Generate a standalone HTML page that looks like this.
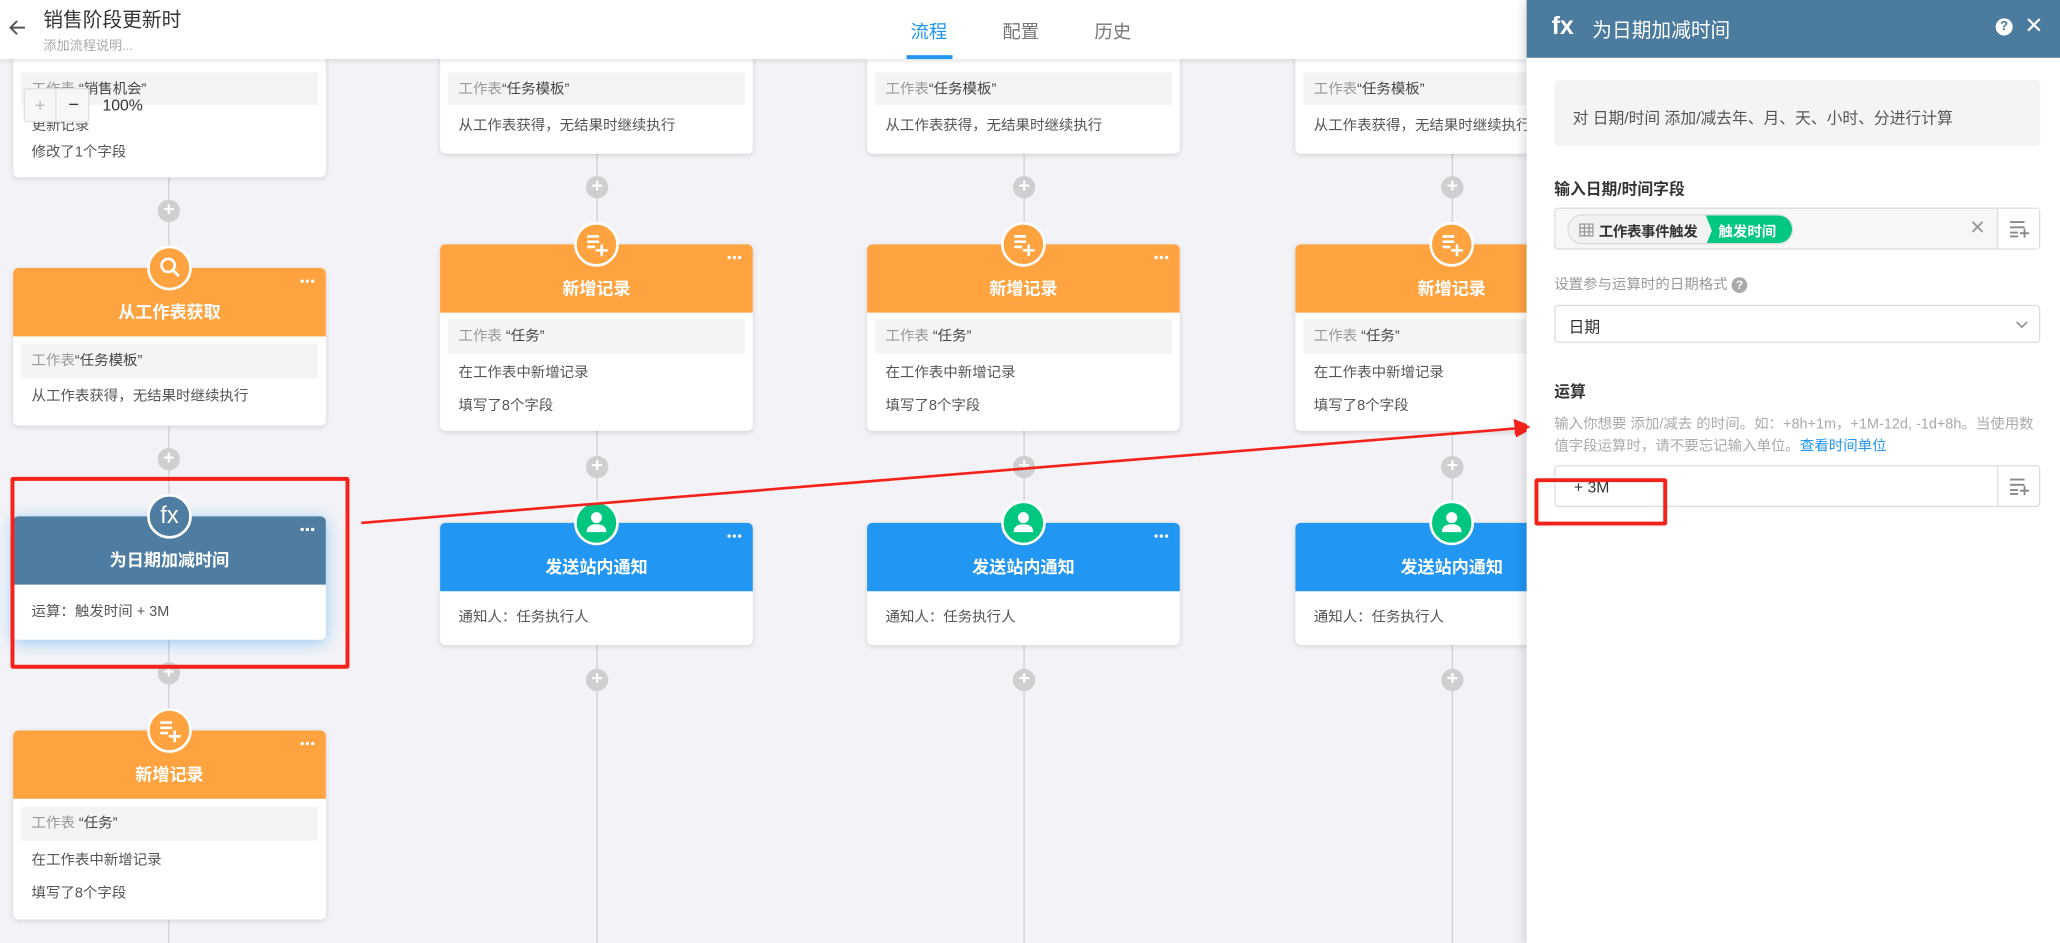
<!DOCTYPE html>
<html><head><meta charset="utf-8"><style>
*{box-sizing:border-box;margin:0;padding:0}
html,body{width:2060px;height:943px;overflow:hidden;background:#f3f3f7}
#w{position:absolute;left:0;top:0;width:1568px;height:718px;transform:scale(1.31378);transform-origin:0 0;font-family:"Liberation Sans","Noto Sans CJK SC",sans-serif;background:#f3f3f7;overflow:hidden}
.a{position:absolute}
.vl{position:absolute;width:1px;background:#d0d0d4;top:44px;height:680px}
.pl{position:absolute;width:17px;height:17px;border-radius:50%;background:#cfcfd2;color:#fff;font-size:15px;line-height:16px;text-align:center;font-weight:bold}
.card{position:absolute;width:238px;background:#fff;border-radius:4px;box-shadow:0 1px 4px rgba(0,0,0,.13)}
.hd{position:absolute;left:0;top:0;width:238px;height:52px;border-radius:4px 4px 0 0;color:#fff;font-weight:bold;font-size:13px;text-align:center;line-height:16px;padding-top:26px}
.or{background:#ffa340}.bl{background:#2196f3}.fx{background:#4e7da1}
.dots{position:absolute;right:8px;top:8px;width:12px;height:4px}
.gr{position:absolute;left:6px;width:226px;height:26px;background:#f4f4f4;line-height:26px;padding-left:8px;font-size:11px;color:#999}
.gr b{font-weight:normal;color:#444}
.t{position:absolute;left:14px;font-size:11px;color:#555;line-height:14px;white-space:nowrap}
.ic{position:absolute;width:34px;height:34px;border-radius:50%;border:2px solid #fff;color:#fff;text-align:center}
</style></head><body><div id="w">

<div class="vl" style="left:128px"></div>
<div class="vl" style="left:454px"></div>
<div class="vl" style="left:779px"></div>
<div class="vl" style="left:1105px"></div>

<!-- column 1 -->
<div class="card" style="left:10px;top:0;height:135px">
 <div class="gr" style="top:55px;height:25px"><span>工作表</span> <b>“销售机会”</b></div>
 <div class="t" style="top:89px">更新记录</div>
 <div class="t" style="top:109px">修改了1个字段</div>
</div>
<div class="pl" style="left:120px;top:152px">+</div>
<div class="card" style="left:10px;top:204px;height:120px">
 <div class="hd or">从工作表获取<svg class="dots" viewBox="0 0 12 4"><circle cx="2" cy="2" r="1.3" fill="#fff"/><circle cx="6" cy="2" r="1.3" fill="#fff"/><circle cx="10" cy="2" r="1.3" fill="#fff"/></svg></div>
 <div class="gr" style="top:58px"><span>工作表</span><b>“任务模板”</b></div>
 <div class="t" style="top:91px">从工作表获得，无结果时继续执行</div>
</div>
<div class="ic or" style="left:112px;top:187px"><svg width="30" height="30" viewBox="0 0 30 30"><circle cx="14" cy="13" r="5" fill="none" stroke="#fff" stroke-width="2"/><path d="M17.5 16.5l4 4" stroke="#fff" stroke-width="2.2" stroke-linecap="round"/></svg></div>
<div class="pl" style="left:120px;top:341px">+</div>
<div class="card" style="left:10px;top:393px;height:94px;box-shadow:0 2px 12px rgba(33,150,243,.45)">
 <div class="hd fx">为日期加减时间<svg class="dots" viewBox="0 0 12 4"><circle cx="2" cy="2" r="1.3" fill="#fff"/><circle cx="6" cy="2" r="1.3" fill="#fff"/><circle cx="10" cy="2" r="1.3" fill="#fff"/></svg></div>
 <div class="t" style="top:66px">运算：触发时间 + 3M</div>
</div>
<div class="ic fx" style="left:112px;top:376px;font-size:18px;line-height:29px">fx</div>
<div class="pl" style="left:120px;top:504px">+</div>
<div class="card" style="left:10px;top:556px;height:144px">
 <div class="hd or">新增记录<svg class="dots" viewBox="0 0 12 4"><circle cx="2" cy="2" r="1.3" fill="#fff"/><circle cx="6" cy="2" r="1.3" fill="#fff"/><circle cx="10" cy="2" r="1.3" fill="#fff"/></svg></div>
 <div class="gr" style="top:58px"><span>工作表</span> <b>“任务”</b></div>
 <div class="t" style="top:92px">在工作表中新增记录</div>
 <div class="t" style="top:117px">填写了8个字段</div>
</div>
<div class="ic or" style="left:112px;top:539px"><svg width="30" height="30" viewBox="0 0 30 30"><path d="M8 9h9M8 13h9M8 17h6M19 15v9M14.5 19.5h9" stroke="#fff" stroke-width="2"/></svg></div>

<!-- columns 2-4 -->
<div class="a" style="left:325px;top:0">
 <div class="card" style="left:10px;top:0;height:117px">
  <div class="gr" style="top:55px;height:25px"><span>工作表</span><b>“任务模板”</b></div>
  <div class="t" style="top:89px">从工作表获得，无结果时继续执行</div>
 </div>
 <div class="pl" style="left:121px;top:134px">+</div>
 <div class="card" style="left:10px;top:186px;height:142px">
  <div class="hd or">新增记录<svg class="dots" viewBox="0 0 12 4"><circle cx="2" cy="2" r="1.3" fill="#fff"/><circle cx="6" cy="2" r="1.3" fill="#fff"/><circle cx="10" cy="2" r="1.3" fill="#fff"/></svg></div>
  <div class="gr" style="top:57px"><span>工作表</span> <b>“任务”</b></div>
  <div class="t" style="top:91px">在工作表中新增记录</div>
  <div class="t" style="top:116px">填写了8个字段</div>
 </div>
 <div class="ic or" style="left:112px;top:169px"><svg width="30" height="30" viewBox="0 0 30 30"><path d="M8 9h9M8 13h9M8 17h6M19 15v9M14.5 19.5h9" stroke="#fff" stroke-width="2"/></svg></div>
 <div class="pl" style="left:121px;top:347px">+</div>
 <div class="card" style="left:10px;top:398px;height:93px">
  <div class="hd bl">发送站内通知<svg class="dots" viewBox="0 0 12 4"><circle cx="2" cy="2" r="1.3" fill="#fff"/><circle cx="6" cy="2" r="1.3" fill="#fff"/><circle cx="10" cy="2" r="1.3" fill="#fff"/></svg></div>
  <div class="t" style="top:65px">通知人：任务执行人</div>
 </div>
 <div class="ic" style="left:112px;top:381px;background:#00c77f"><svg width="30" height="30" viewBox="0 0 30 30"><circle cx="15" cy="11" r="4.2" fill="#fff"/><path d="M7.5 22c0-4.5 3.5-6 7.5-6s7.5 1.5 7.5 6z" fill="#fff"/></svg></div>
 <div class="pl" style="left:121px;top:509px">+</div>
</div>
<div class="a" style="left:650px;top:0">
 <div class="card" style="left:10px;top:0;height:117px">
  <div class="gr" style="top:55px;height:25px"><span>工作表</span><b>“任务模板”</b></div>
  <div class="t" style="top:89px">从工作表获得，无结果时继续执行</div>
 </div>
 <div class="pl" style="left:121px;top:134px">+</div>
 <div class="card" style="left:10px;top:186px;height:142px">
  <div class="hd or">新增记录<svg class="dots" viewBox="0 0 12 4"><circle cx="2" cy="2" r="1.3" fill="#fff"/><circle cx="6" cy="2" r="1.3" fill="#fff"/><circle cx="10" cy="2" r="1.3" fill="#fff"/></svg></div>
  <div class="gr" style="top:57px"><span>工作表</span> <b>“任务”</b></div>
  <div class="t" style="top:91px">在工作表中新增记录</div>
  <div class="t" style="top:116px">填写了8个字段</div>
 </div>
 <div class="ic or" style="left:112px;top:169px"><svg width="30" height="30" viewBox="0 0 30 30"><path d="M8 9h9M8 13h9M8 17h6M19 15v9M14.5 19.5h9" stroke="#fff" stroke-width="2"/></svg></div>
 <div class="pl" style="left:121px;top:347px">+</div>
 <div class="card" style="left:10px;top:398px;height:93px">
  <div class="hd bl">发送站内通知<svg class="dots" viewBox="0 0 12 4"><circle cx="2" cy="2" r="1.3" fill="#fff"/><circle cx="6" cy="2" r="1.3" fill="#fff"/><circle cx="10" cy="2" r="1.3" fill="#fff"/></svg></div>
  <div class="t" style="top:65px">通知人：任务执行人</div>
 </div>
 <div class="ic" style="left:112px;top:381px;background:#00c77f"><svg width="30" height="30" viewBox="0 0 30 30"><circle cx="15" cy="11" r="4.2" fill="#fff"/><path d="M7.5 22c0-4.5 3.5-6 7.5-6s7.5 1.5 7.5 6z" fill="#fff"/></svg></div>
 <div class="pl" style="left:121px;top:509px">+</div>
</div>
<div class="a" style="left:976px;top:0">
 <div class="card" style="left:10px;top:0;height:117px">
  <div class="gr" style="top:55px;height:25px"><span>工作表</span><b>“任务模板”</b></div>
  <div class="t" style="top:89px">从工作表获得，无结果时继续执行</div>
 </div>
 <div class="pl" style="left:121px;top:134px">+</div>
 <div class="card" style="left:10px;top:186px;height:142px">
  <div class="hd or">新增记录<svg class="dots" viewBox="0 0 12 4"><circle cx="2" cy="2" r="1.3" fill="#fff"/><circle cx="6" cy="2" r="1.3" fill="#fff"/><circle cx="10" cy="2" r="1.3" fill="#fff"/></svg></div>
  <div class="gr" style="top:57px"><span>工作表</span> <b>“任务”</b></div>
  <div class="t" style="top:91px">在工作表中新增记录</div>
  <div class="t" style="top:116px">填写了8个字段</div>
 </div>
 <div class="ic or" style="left:112px;top:169px"><svg width="30" height="30" viewBox="0 0 30 30"><path d="M8 9h9M8 13h9M8 17h6M19 15v9M14.5 19.5h9" stroke="#fff" stroke-width="2"/></svg></div>
 <div class="pl" style="left:121px;top:347px">+</div>
 <div class="card" style="left:10px;top:398px;height:93px">
  <div class="hd bl">发送站内通知<svg class="dots" viewBox="0 0 12 4"><circle cx="2" cy="2" r="1.3" fill="#fff"/><circle cx="6" cy="2" r="1.3" fill="#fff"/><circle cx="10" cy="2" r="1.3" fill="#fff"/></svg></div>
  <div class="t" style="top:65px">通知人：任务执行人</div>
 </div>
 <div class="ic" style="left:112px;top:381px;background:#00c77f"><svg width="30" height="30" viewBox="0 0 30 30"><circle cx="15" cy="11" r="4.2" fill="#fff"/><path d="M7.5 22c0-4.5 3.5-6 7.5-6s7.5 1.5 7.5 6z" fill="#fff"/></svg></div>
 <div class="pl" style="left:121px;top:509px">+</div>
</div>

<!-- zoom control -->
<div class="a" style="left:18px;top:67px;width:50px;height:26px;border:1px solid #e0e0e0;background:#f7f7f7;border-radius:2px">
 <div class="a" style="left:0;top:0;width:24px;height:24px;border-right:1px solid #e0e0e0;text-align:center;line-height:24px;color:#bbb;font-size:14px">+</div>
 <div class="a" style="left:25px;top:0;width:24px;height:24px;text-align:center;line-height:23px;color:#333;font-size:14px">−</div>
</div>
<div class="a" style="left:78px;top:73px;font-size:12px;color:#333">100%</div>

<!-- top bar -->
<div class="a" style="left:0;top:0;width:1568px;height:45px;background:#fff;box-shadow:0 1px 4px rgba(0,0,0,.12)">
 <svg class="a" style="left:5px;top:13px" width="16" height="16" viewBox="0 0 16 16"><path d="M14 8H3M8 3L3 8l5 5" fill="none" stroke="#555" stroke-width="1.5"/></svg>
 <div class="a" style="left:33px;top:4px;font-size:15px;color:#333">销售阶段更新时</div>
 <div class="a" style="left:33px;top:26px;font-size:10px;color:#aaa">添加流程说明...</div>
 <div class="a" style="left:693px;top:14px;font-size:14px;color:#2196f3">流程</div>
 <div class="a" style="left:690px;top:42px;width:35px;height:3px;background:#2196f3"></div>
 <div class="a" style="left:763px;top:14px;font-size:14px;color:#777">配置</div>
 <div class="a" style="left:833px;top:14px;font-size:14px;color:#777">历史</div>
</div>

<!-- red annotations -->
<div class="a" style="left:8px;top:363px;width:258px;height:146px;border:3px solid #f5221b;border-radius:2px"></div>
<svg class="a" style="left:0;top:0" width="1568" height="718"><line x1="275" y1="398" x2="1155" y2="326" stroke="#f5221b" stroke-width="2"/><polygon points="1168,325 1152,319 1154,333" fill="#f5221b"/></svg>

<!-- right panel -->
<div class="a" style="left:1162px;top:0;width:406px;height:718px;background:#fff;box-shadow:-2px 0 8px rgba(0,0,0,.15)">
 <div class="a" style="left:0;top:0;width:406px;height:44px;background:#4b7b9e;color:#fff">
  <div class="a" style="left:19px;top:10px;font-size:19px;font-weight:bold">fx</div>
  <div class="a" style="left:50px;top:12px;font-size:15px">为日期加减时间</div>
  <div class="a" style="left:357px;top:14px;width:13px;height:13px;border-radius:50%;background:#fff;color:#4b7b9e;font-size:10px;font-weight:bold;text-align:center;line-height:13px">?</div>
  <div class="a" style="left:379px;top:10px;font-size:17px">✕</div>
 </div>
 <div class="a" style="left:21px;top:61px;width:370px;height:50px;background:#f4f4f4;border-radius:3px;font-size:12px;color:#555;padding:20px 0 0 14px">对 日期/时间 添加/减去年、月、天、小时、分进行计算</div>
 <div class="a" style="left:21px;top:135px;font-size:12px;font-weight:bold;color:#333">输入日期/时间字段</div>
 <div class="a" style="left:21px;top:158px;width:370px;height:32px;border:1px solid #ddd;background:#f7f7f7;border-radius:3px">
  <div class="a" style="left:9px;top:4px;width:172px;height:23px;border:1px solid #ddd;border-radius:12px;background:#f2f2f2;overflow:hidden">
   <svg class="a" style="left:8px;top:6px" width="11" height="10" viewBox="0 0 11 10"><path d="M0.5 0.5h10v9h-10zM0.5 3.5h10M0.5 6.5h10M4 0.5v9M7.5 0.5v9" fill="none" stroke="#999"/></svg>
   <div class="a" style="left:23px;top:4px;font-size:11px;font-weight:bold;color:#333;letter-spacing:-0.3px">工作表事件触发</div>
   <div class="a" style="left:104px;top:-1px;width:70px;height:25px;background:#00c881;clip-path:polygon(0 0,100% 0,100% 100%,0 100%,5px 50%)"></div>
   <div class="a" style="left:114px;top:4px;font-size:11px;font-weight:bold;color:#fff;white-space:nowrap">触发时间</div>
  </div>
  <div class="a" style="left:315px;top:5px;font-size:15px;color:#999">✕</div>
  <div class="a" style="left:336px;top:0;width:32px;height:30px;border-left:1px solid #ddd;background:#fff"><svg class="a" style="left:8px;top:8px" width="16" height="14" viewBox="0 0 16 14"><path d="M1 2h11M1 6h11M1 10h6M1 13h6M12 7v7M8.5 10.5h7" stroke="#888" stroke-width="1.4"/></svg></div>
 </div>
 <div class="a" style="left:21px;top:208px;font-size:11px;color:#999">设置参与运算时的日期格式 <span style="display:inline-block;width:12px;height:12px;border-radius:50%;background:#aaa;color:#fff;font-size:9px;text-align:center;line-height:12px;font-weight:bold">?</span></div>
 <div class="a" style="left:21px;top:232px;width:370px;height:29px;border:1px solid #ddd;border-radius:3px;font-size:12px;color:#333;padding:7px 0 0 10px">日期
  <svg class="a" style="left:350px;top:11px" width="10" height="6" viewBox="0 0 10 6"><path d="M1 1l4 4 4-4" fill="none" stroke="#888" stroke-width="1.2"/></svg></div>
 <div class="a" style="left:21px;top:289px;font-size:12px;font-weight:bold;color:#333">运算</div>
 <div class="a" style="left:21px;top:315px;width:372px;font-size:11px;color:#aaa;line-height:17px">输入你想要 添加/减去 的时间。如：+8h+1m，+1M-12d, -1d+8h。当使用数值字段运算时，请不要忘记输入单位。<span style="color:#2196f3">查看时间单位</span></div>
 <div class="a" style="left:21px;top:354px;width:370px;height:32px;border:1px solid #ddd;border-radius:3px;background:#fff">
  <div class="a" style="left:14px;top:9px;font-size:12px;color:#333">+ 3M</div>
  <div class="a" style="left:336px;top:0;width:32px;height:30px;border-left:1px solid #ddd"><svg class="a" style="left:8px;top:8px" width="16" height="14" viewBox="0 0 16 14"><path d="M1 2h11M1 6h11M1 10h6M1 13h6M12 7v7M8.5 10.5h7" stroke="#888" stroke-width="1.4"/></svg></div>
 </div>
 <div class="a" style="left:6px;top:364px;width:101px;height:36px;border:3px solid #f5221b;border-radius:2px"></div>
</div>
<div class="a" style="left:1153px;top:319px;width:0;height:0;border-top:6px solid transparent;border-bottom:6px solid transparent;border-left:12px solid #f5221b"></div>
</div></body></html>
